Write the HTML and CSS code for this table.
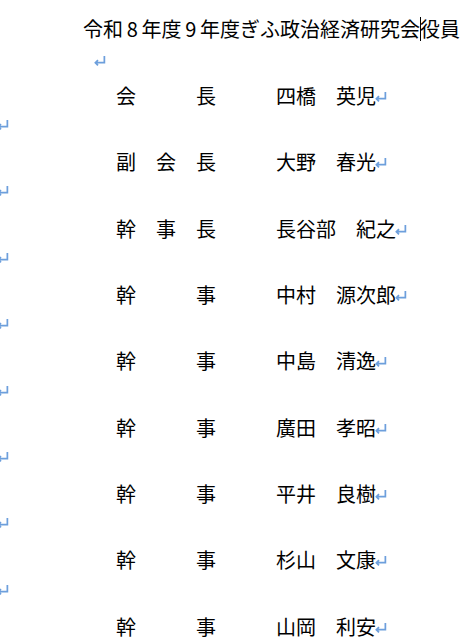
FILE: index.html
```html
<!DOCTYPE html>
<html lang="ja">
<head>
<meta charset="utf-8">
<title>役員</title>
<link rel="stylesheet" href="styles.css">
</head>
<body>
<div class="doc">
  <p class="line title">令和<span class="num">8</span>年度<span class="num">9</span>年度ぎふ政治経済研究会<span class="caret"></span>役員</p>
  <p class="line mark"><svg class="ret" viewBox="0 0 12 10"><path d="M10.5 0.8V7H2.2M4.6 4.6L2.2 7L4.6 9.4"/></svg></p>
  <p class="line row">会　　　長　　　四橋　英児<svg class="ret" viewBox="0 0 12 10"><path d="M10.5 0.8V7H2.2M4.6 4.6L2.2 7L4.6 9.4"/></svg></p>
  <p class="line blank"><svg class="ret edge" viewBox="0 0 12 10"><path d="M10.5 0.8V7H2.2M4.6 4.6L2.2 7L4.6 9.4"/></svg></p>
  <p class="line row">副　会　長　　　大野　春光<svg class="ret" viewBox="0 0 12 10"><path d="M10.5 0.8V7H2.2M4.6 4.6L2.2 7L4.6 9.4"/></svg></p>
  <p class="line blank"><svg class="ret edge" viewBox="0 0 12 10"><path d="M10.5 0.8V7H2.2M4.6 4.6L2.2 7L4.6 9.4"/></svg></p>
  <p class="line row">幹　事　長　　　長谷部　紀之<svg class="ret" viewBox="0 0 12 10"><path d="M10.5 0.8V7H2.2M4.6 4.6L2.2 7L4.6 9.4"/></svg></p>
  <p class="line blank"><svg class="ret edge" viewBox="0 0 12 10"><path d="M10.5 0.8V7H2.2M4.6 4.6L2.2 7L4.6 9.4"/></svg></p>
  <p class="line row">幹　　　事　　　中村　源次郎<svg class="ret" viewBox="0 0 12 10"><path d="M10.5 0.8V7H2.2M4.6 4.6L2.2 7L4.6 9.4"/></svg></p>
  <p class="line blank"><svg class="ret edge" viewBox="0 0 12 10"><path d="M10.5 0.8V7H2.2M4.6 4.6L2.2 7L4.6 9.4"/></svg></p>
  <p class="line row">幹　　　事　　　中島　清逸<svg class="ret" viewBox="0 0 12 10"><path d="M10.5 0.8V7H2.2M4.6 4.6L2.2 7L4.6 9.4"/></svg></p>
  <p class="line blank"><svg class="ret edge" viewBox="0 0 12 10"><path d="M10.5 0.8V7H2.2M4.6 4.6L2.2 7L4.6 9.4"/></svg></p>
  <p class="line row">幹　　　事　　　廣田　孝昭<svg class="ret" viewBox="0 0 12 10"><path d="M10.5 0.8V7H2.2M4.6 4.6L2.2 7L4.6 9.4"/></svg></p>
  <p class="line blank"><svg class="ret edge" viewBox="0 0 12 10"><path d="M10.5 0.8V7H2.2M4.6 4.6L2.2 7L4.6 9.4"/></svg></p>
  <p class="line row">幹　　　事　　　平井　良樹<svg class="ret" viewBox="0 0 12 10"><path d="M10.5 0.8V7H2.2M4.6 4.6L2.2 7L4.6 9.4"/></svg></p>
  <p class="line blank"><svg class="ret edge" viewBox="0 0 12 10"><path d="M10.5 0.8V7H2.2M4.6 4.6L2.2 7L4.6 9.4"/></svg></p>
  <p class="line row">幹　　　事　　　杉山　文康<svg class="ret" viewBox="0 0 12 10"><path d="M10.5 0.8V7H2.2M4.6 4.6L2.2 7L4.6 9.4"/></svg></p>
  <p class="line blank"><svg class="ret edge" viewBox="0 0 12 10"><path d="M10.5 0.8V7H2.2M4.6 4.6L2.2 7L4.6 9.4"/></svg></p>
  <p class="line row">幹　　　事　　　山岡　利安<svg class="ret" viewBox="0 0 12 10"><path d="M10.5 0.8V7H2.2M4.6 4.6L2.2 7L4.6 9.4"/></svg></p>
</div>
</body>
</html>
```
FILE: styles.css
```css
html, body {
  margin: 0;
  padding: 0;
  background: #ffffff;
  overflow: hidden;
}

.doc {
  padding-top: 12.4px;
  font-family: "Noto Sans CJK JP", "Noto Sans", sans-serif;
  font-size: 20px;
  font-weight: 400;
  color: #000000;
}

.line {
  margin: 0;
  height: 33.2px;
  line-height: 33.2px;
  white-space: nowrap;
  display: flex;
  align-items: center;
}

.title {
  padding-left: 83px;
}

.num {
  display: inline-block;
  width: 18.5px;
  text-align: center;
}

.caret {
  display: inline-block;
  width: 1px;
  height: 24px;
  margin-right: -1px;
  background: #000000;
}

.mark {
  padding-left: 93px;
}

.row {
  padding-left: 116px;
}

.ret {
  width: 13px;
  height: 11px;
  flex: none;
  fill: none;
  stroke: #6d9fdc;
  stroke-width: 1.6;
  margin-left: -2px;
  margin-top: 2px;
}

.mark .ret {
  margin-left: 0;
  margin-top: -4px;
}

.blank .ret.edge {
  margin-left: -4px;
  margin-top: -8px;
}
```
